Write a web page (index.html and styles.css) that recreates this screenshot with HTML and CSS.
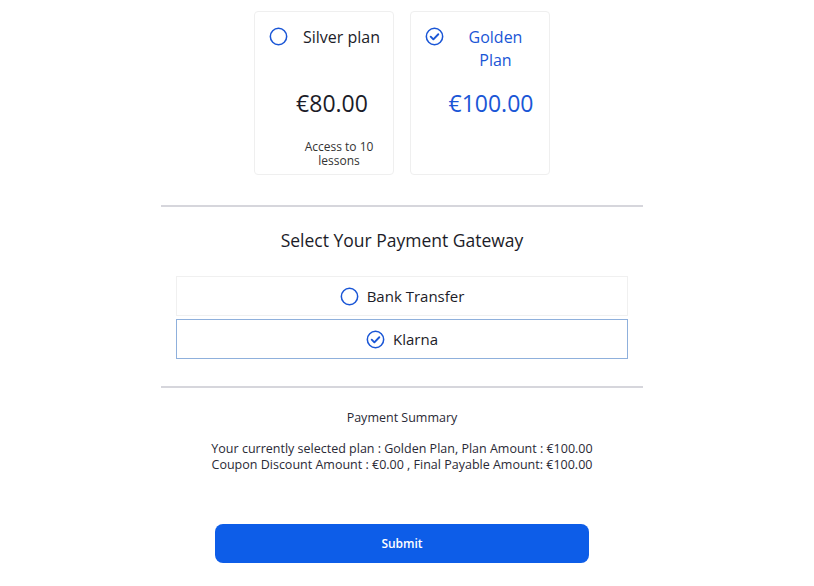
FILE: index.html
```html
<!DOCTYPE html>
<html lang="en">
<head>
    <meta charset="UTF-8" />
    <meta name="viewport" content="width=device-width, initial-scale=1.0" />
    <title>Checkout</title>
    <link rel="stylesheet" href="styles.css">
</head>
<body>
    <div class="page">
        <div class="plans">
            <div class="plan-card">
                <div class="plan-head">
                    <svg class="radio" viewBox="0 0 20 20"><circle cx="10" cy="10" r="8.6" fill="none" stroke="#1a56d6" stroke-width="1.6"/></svg>
                    <span class="plan-name">Silver plan</span>
                </div>
                <div class="plan-price">€80.00</div>
                <div class="plan-desc">Access to 10 lessons</div>
            </div>
            <div class="plan-card selected">
                <div class="plan-head">
                    <svg class="radio" viewBox="0 0 20 20"><circle cx="10" cy="10" r="8.6" fill="none" stroke="#1a56d6" stroke-width="1.6"/><path d="M6 10.2l2.8 2.8 5.2-5.4" fill="none" stroke="#1a56d6" stroke-width="2" stroke-linecap="round" stroke-linejoin="round"/></svg>
                    <span class="plan-name">Golden Plan</span>
                </div>
                <div class="plan-price">€100.00</div>
            </div>
        </div>

        <hr class="divider">

        <h2 class="section-title">Select Your Payment Gateway</h2>
        <div class="gateways">
            <div class="gateway">
                <svg class="radio" viewBox="0 0 20 20"><circle cx="10" cy="10" r="8.6" fill="none" stroke="#1a56d6" stroke-width="1.6"/></svg>
                <span>Bank Transfer</span>
            </div>
            <div class="gateway active">
                <svg class="radio" viewBox="0 0 20 20"><circle cx="10" cy="10" r="8.6" fill="none" stroke="#1a56d6" stroke-width="1.6"/><path d="M6 10.2l2.8 2.8 5.2-5.4" fill="none" stroke="#1a56d6" stroke-width="2" stroke-linecap="round" stroke-linejoin="round"/></svg>
                <span>Klarna</span>
            </div>
        </div>

        <hr class="divider">

        <div class="summary">
            <p class="summary-title">Payment Summary</p>
            <p class="summary-text">Your currently selected plan : Golden Plan, Plan Amount : €100.00<br>Coupon Discount Amount : €0.00 , Final Payable Amount: €100.00</p>
        </div>

        <button class="submit-btn">Submit</button>
    </div>
</body>
</html>
```

FILE: styles.css
```css
body {
    margin: 0;
    font-family: "Open Sans", sans-serif;
    color: #1c1c28;
    background: white;
}
.page {
    width: 482px;
    margin: 0 0 0 161px;
    padding-top: 11px;
}
.plans {
    display: flex;
    justify-content: center;
    gap: 16px;
}
.plan-card {
    width: 140px;
    height: 164px;
    box-sizing: border-box;
    border: 1px solid #efefef;
    border-radius: 4px;
    padding: 14px 10px 0 14px;
}
.plan-head {
    display: flex;
    align-items: flex-start;
    gap: 12px;
}
.radio {
    width: 19px;
    height: 19px;
    flex-shrink: 0;
}
.plan-head .radio {
    margin-top: 1px;
}
.plan-name {
    font-size: 16px;
    line-height: 23px;
    text-align: center;
    flex: 1;
}
.plan-price {
    font-size: 23px;
    text-align: center;
    margin-top: 38px;
    padding-left: 12px;
}
.plan-desc {
    font-size: 12px;
    line-height: 14px;
    text-align: center;
    color: #333;
    margin: 21px 0 0 26px;
}
.plan-card.selected .plan-name,
.plan-card.selected .plan-price {
    color: #1a56d6;
}
.plan-card.selected .plan-name {
    padding-right: 4px;
}
.plan-card.selected .plan-price {
    margin-top: 15px;
    padding-left: 18px;
}
.divider {
    border: none;
    border-top: 2px solid #d6d6dc;
    margin: 30px 0 0;
}
.section-title {
    font-weight: normal;
    font-size: 17.5px;
    line-height: 24px;
    text-align: center;
    margin: 21px 0 0;
}
.gateways {
    margin: 24px 15px 0;
    display: flex;
    flex-direction: column;
    gap: 3px;
}
.gateway {
    height: 40px;
    box-sizing: border-box;
    border: 1px solid #f0f0f0;
    display: flex;
    align-items: center;
    justify-content: center;
    gap: 8px;
    font-size: 15px;
}
.gateway.active {
    border-color: #8fb0dc;
}
.gateways + .divider {
    margin-top: 27px;
}
.summary {
    text-align: center;
    font-size: 12.5px;
    color: #2a2a36;
}
.summary-title {
    margin: 21px 0 0;
}
.summary-text {
    margin: 15px 0 0;
    line-height: 16px;
}
.submit-btn {
    display: block;
    width: 374px;
    height: 39px;
    margin: 51px auto 0;
    background: #0d5de8;
    color: white;
    border: none;
    border-radius: 8px;
    font-family: inherit;
    font-size: 12px;
    font-weight: 600;
    cursor: pointer;
}
```
